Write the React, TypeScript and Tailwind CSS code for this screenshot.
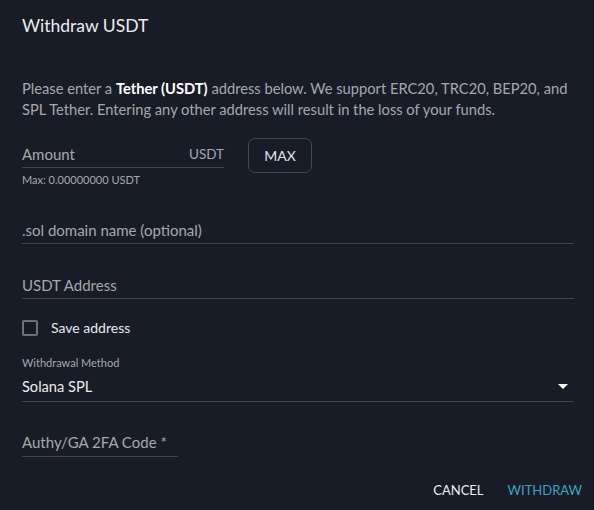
import React from 'react'

const font = { fontFamily: 'Lato, "Noto Sans", sans-serif' }

function Field({ label, className = '', right }: { label: string; className?: string; right?: string }) {
  return (
    <div className={`flex items-end justify-between border-b border-[#41444d] ${className}`}>
      <span className="text-[15px] leading-[20px] text-[#a6a8ad]">{label}</span>
      {right && <span className="text-[13.5px] leading-[20px] text-[#a6a8ad]">{right}</span>}
    </div>
  )
}

export default function App() {
  return (
    <div className="min-h-screen w-full bg-[#181c26] text-white" style={font}>
      <div className="pl-[22px] pr-[20px] pt-[14px]">
        <h1 className="text-[17.5px] leading-[24px] font-normal text-[#ececee]">Withdraw USDT</h1>

        <p className="mt-[40px] pr-[2px] text-[14.7px] leading-[21px] text-[#a6a8ad]">
          Please enter a <b className="font-bold text-white">Tether (USDT)</b> address below. We support ERC20,
          TRC20, BEP20, and SPL Tether. Entering any other address will result in the loss of your funds.
        </p>

        <div className="mt-[18px] flex items-start gap-[24px]">
          <div className="w-[202px]">
            <Field label="Amount" right="USDT" className="pt-[6px] pb-[3px]" />
            <div className="mt-[5px] text-[11px] leading-[13px] text-[#a6a8ad]">Max: 0.00000000 USDT</div>
          </div>
          <button className="h-[35px] w-[64px] rounded-[7px] border border-[#44474f] text-[14px] text-[#e2e3e5]">
            MAX
          </button>
        </div>

        <Field label=".sol domain name (optional)" className="mt-[34px] pb-[3px]" />
        <Field label="USDT Address" className="mt-[31px] pb-[3px]" />

        <label className="mt-[20px] flex h-[18px] items-center gap-[13px]">
          <span className="h-[16px] w-[16px] rounded-[2px] border-2 border-[#6d7079]" />
          <span className="text-[14px] leading-[18px] text-[#e8e9ea]">Save address</span>
        </label>

        <div className="mt-[19px] text-[11px] leading-[13px] text-[#a6a8ad]">Withdrawal Method</div>
        <div className="mt-[8px] flex items-center justify-between border-b border-[#41444d] pb-[4px]">
          <span className="text-[14.6px] leading-[20px] text-[#eceded]">Solana SPL</span>
          <svg width="10" height="6" viewBox="0 0 10 6" className="mr-[6px]">
            <path d="M0 0h10L5 5z" fill="#ffffff" />
          </svg>
        </div>

        <Field label="Authy/GA 2FA Code *" className="mt-[30px] w-[156px] pb-[4px]" />

        <div className="-mr-[8px] mt-[23px] flex justify-end gap-[24px]">
          <button className="text-[13px] leading-[20px] text-[#eceded]">CANCEL</button>
          <button className="text-[13px] leading-[20px] text-[#3fa0c4]">WITHDRAW</button>
        </div>
      </div>
    </div>
  )
}
